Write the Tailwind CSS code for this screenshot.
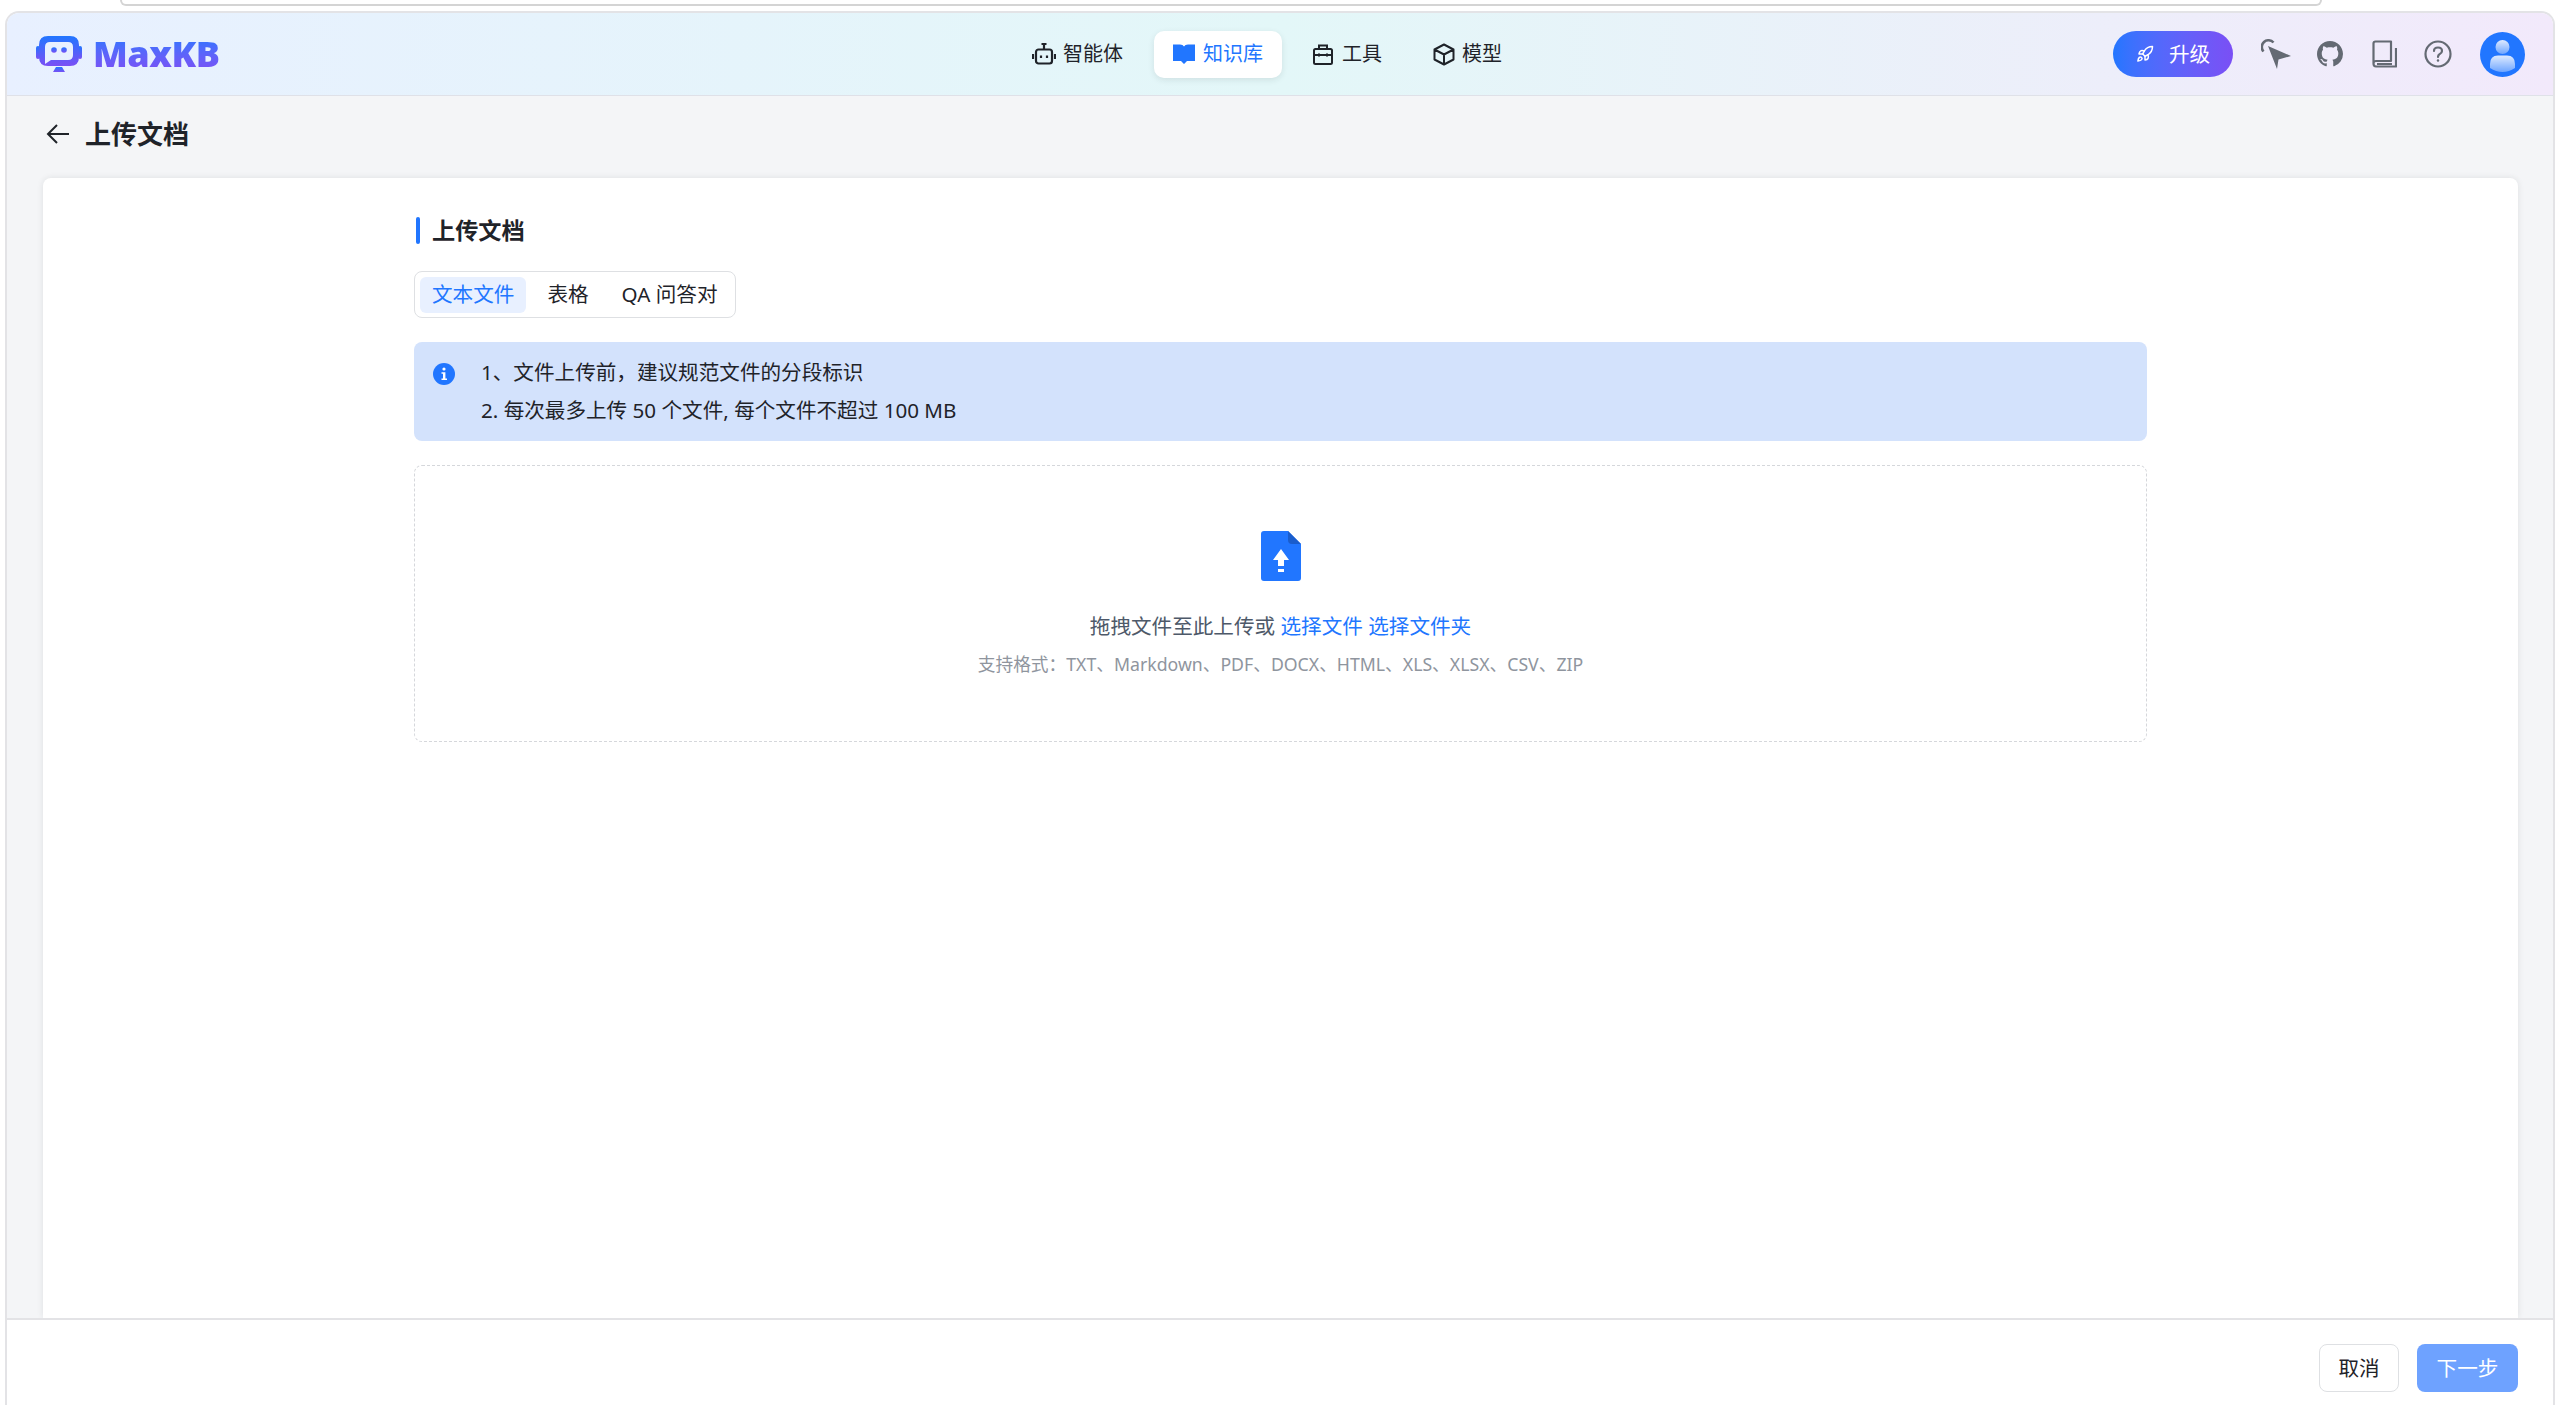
<!doctype html>
<html lang="zh-CN">
<head>
  <meta charset="utf-8"/>
  <title>MaxKB 上传文档</title>
  <script src="https://cdn.jsdelivr.net/npm/@tailwindcss/browser@4"></script>
</head>
<body class="w-[2556px] h-[1405px] overflow-hidden bg-white text-[#1f2329] [font-family:'Noto_Sans','Noto_Sans_CJK_SC',sans-serif]">
  <!-- strip of the browser bar above the window -->
  <div class="h-[11px] px-[120px]">
    <div class="h-[6px] mr-[114px] border-x-2 border-b-2 border-[#d4d4d4] rounded-b-[16px]"></div>
  </div>

  <div class="ml-[5px] mr-[1px] h-[1394px] flex flex-col border-x-2 border-t-2 border-[#e3e3e6] rounded-t-[14px] overflow-hidden">
    <!-- header -->
    <header class="h-[83px] shrink-0 flex items-center pl-[29px] pr-[28px] border-b border-[#dfe1e8] bg-linear-to-r from-[#e8f0ff] via-[#e3f7f8] to-[#f2e9fb]">
      <div class="flex items-center gap-[11px] w-[977px]">
        <svg width="46" height="36" viewBox="0 0 46 36">
          <defs>
            <linearGradient id="logo" x1="0" y1="0" x2="0" y2="1">
              <stop offset="0" stop-color="#2176ff"/>
              <stop offset="1" stop-color="#7a4ff5"/>
            </linearGradient>
          </defs>
          <rect x="0" y="10" width="4" height="13" rx="2" fill="url(#logo)"/>
          <rect x="42" y="10" width="4" height="13" rx="2" fill="url(#logo)"/>
          <path fill="url(#logo)" fill-rule="evenodd" d="M12 0H34Q43 0 43 9V21Q43 30 34 30H12Q3 30 3 21V9Q3 0 12 0ZM14 6Q9 6 9 11V28L15 24H32Q37 24 37 19V11Q37 6 32 6Z"/>
          <circle cx="18" cy="14" r="2.8" fill="url(#logo)"/>
          <circle cx="28" cy="14" r="2.8" fill="url(#logo)"/>
          <path fill="url(#logo)" d="M17 36L20 31H26L29 36Z"/>
        </svg>
        <span class="text-[36px] leading-none font-black tracking-[-0.5px] bg-linear-to-b from-[#2176ff] to-[#7a4ff5] bg-clip-text text-transparent">MaxKB</span>
      </div>

      <nav class="flex items-center gap-[12px] text-[20px]">
        <a class="h-[47px] flex items-center gap-[7px] pl-[19px] pr-[19px]">
          <svg width="24" height="24" viewBox="0 0 24 24" fill="none" stroke="#1f2329" stroke-width="2.2">
            <rect x="4" y="7.5" width="16" height="14" rx="2.5"/>
            <path d="M12 7.5V2.5M9.5 2h5M1 12v5M23 12v5M9 13.5v2.5M15 13.5v2.5"/>
          </svg>
          <span>智能体</span>
        </a>
        <a class="h-[47px] flex items-center gap-[8px] pl-[19px] pr-[19px] rounded-[10px] bg-white shadow-[0_2px_6px_rgba(31,35,41,0.1)] text-[#2176ff]">
          <svg width="22" height="22" viewBox="0 0 22 22" fill="#2176ff">
            <path d="M0 1.5H7Q10 1.5 11 3.5Q12 1.5 15 1.5H22V18H14L11 21L8 18H0Z"/>
          </svg>
          <span>知识库</span>
        </a>
        <a class="h-[47px] flex items-center gap-[9px] pl-[19px] pr-[19px]">
          <svg width="20" height="21" viewBox="0 0 20 21" fill="none" stroke="#1f2329" stroke-width="2">
            <rect x="1" y="5" width="18" height="15" rx="1.5"/>
            <path d="M6 5V1.5H14V5M1 11H19M6 9.5V12.5M14 9.5V12.5"/>
          </svg>
          <span>工具</span>
        </a>
        <a class="h-[47px] flex items-center gap-[7px] pl-[20px] pr-[18px]">
          <svg width="22" height="23" viewBox="0 0 22 23" fill="none" stroke="#1f2329" stroke-width="2" stroke-linejoin="round">
            <path d="M11 1.5L20.5 6.5V16.5L11 21.5L1.5 16.5V6.5ZM1.5 6.5L11 11.5L20.5 6.5M11 11.5V21.5"/>
          </svg>
          <span>模型</span>
        </a>
      </nav>

      <div class="ml-auto flex items-center">
        <button class="h-[46px] w-[120px] flex items-center justify-center gap-[15px] rounded-full bg-linear-to-r from-[#2176ff] to-[#7a4ff5] text-white text-[20.6px]">
          <svg width="18" height="18" viewBox="0 0 24 24" fill="none" stroke="#fff" stroke-width="2" stroke-linecap="round" stroke-linejoin="round">
            <path d="M4.5 16.5c-1.5 1.26-2 5-2 5s3.74-.5 5-2c.71-.84.7-2.13-.09-2.91a2.18 2.18 0 0 0-2.91-.09z"/>
            <path d="m12 15-3-3a22 22 0 0 1 2-3.95A12.88 12.88 0 0 1 22 2c0 2.72-.78 7.5-6 11a22.35 22.35 0 0 1-4 2z"/>
            <path d="M9 12H4s.55-3.03 2-4c1.62-1.08 5 0 5 0M12 15v5s3.03-.55 4-2c1.08-1.62 0-5 0-5"/>
          </svg>
          <span>升级</span>
        </button>

        <svg class="ml-[28px]" width="30" height="30" viewBox="0 0 30 30" fill="#646a73">
          <path d="M7 7L30 17L17.5 20.5L16 30Z"/>
          <path d="M2.5 12.5A6 6 0 0 1 12.5 3.5" fill="none" stroke="#646a73" stroke-width="2.6"/>
        </svg>
        <svg class="ml-[26px]" width="26" height="26" viewBox="0 0 16 16" fill="#646a73">
          <path d="M8 0C3.58 0 0 3.58 0 8c0 3.54 2.29 6.53 5.47 7.59.4.07.55-.17.55-.38 0-.19-.01-.82-.01-1.49-2.01.37-2.53-.49-2.69-.94-.09-.23-.48-.94-.82-1.13-.28-.15-.68-.52-.01-.53.63-.01 1.08.58 1.23.82.72 1.21 1.87.87 2.33.66.07-.52.28-.87.51-1.07-1.78-.2-3.64-.89-3.64-3.95 0-.87.31-1.59.82-2.15-.08-.2-.36-1.02.08-2.12 0 0 .67-.21 2.2.82.64-.18 1.32-.27 2-.27s1.36.09 2 .27c1.53-1.04 2.2-.82 2.2-.82.44 1.1.16 1.92.08 2.12.51.56.82 1.27.82 2.15 0 3.07-1.87 3.75-3.65 3.95.29.25.54.73.54 1.48 0 1.07-.01 1.93-.01 2.2 0 .21.15.46.55.38A8.01 8.01 0 0 0 16 8c0-4.42-3.58-8-8-8z"/>
        </svg>
        <svg class="ml-[29px]" width="25" height="28" viewBox="0 0 25 28" fill="none" stroke="#646a73" stroke-width="2.2" stroke-linejoin="round">
          <path d="M1.5 23.5V3.5Q1.5 1.5 3.5 1.5H19V21H4Q1.5 21 1.5 23.5Q1.5 26.5 4 26.5H24V8"/>
          <path d="M5 24H20"/>
        </svg>
        <svg class="ml-[27px]" width="28" height="28" viewBox="0 0 28 28" fill="none" stroke="#646a73" stroke-width="2.2" stroke-linecap="round">
          <circle cx="14" cy="14" r="12.5"/>
          <path d="M10 11Q10 7.5 14 7.5Q18 7.5 18 11Q18 13 15.5 14.2Q14 15 14 17"/>
          <circle cx="14" cy="20.5" r="0.6" fill="#646a73" stroke-width="1.4"/>
        </svg>
        <svg class="ml-[28px]" width="45" height="45" viewBox="0 0 45 45">
          <defs>
            <linearGradient id="person" x1="0" y1="0" x2="0" y2="1">
              <stop offset="0" stop-color="#fff" stop-opacity="0.85"/>
              <stop offset="1" stop-color="#fff" stop-opacity="0.35"/>
            </linearGradient>
          </defs>
          <circle cx="22.5" cy="22.5" r="22.5" fill="#2176ff"/>
          <circle cx="22.5" cy="15" r="7" fill="url(#person)"/>
          <path d="M10 36V32Q10 23.5 18 23.5H27Q35 23.5 35 32V36Q29 40 22.5 40Q16 40 10 36Z" fill="url(#person)"/>
        </svg>
      </div>
    </header>

    <!-- page -->
    <main class="flex-1 min-h-0 flex flex-col bg-[#f4f5f7]">
      <div class="h-[82px] shrink-0 flex items-center pl-[39px] pb-[6px]">
        <svg width="24" height="22" viewBox="0 0 24 22" fill="none" stroke="#1f2329" stroke-width="2">
          <path d="M23 11H2M11 2L2 11L11 20"/>
        </svg>
        <h1 class="ml-[15px] text-[26px] font-semibold">上传文档</h1>
      </div>

      <section class="flex-1 min-h-0 ml-[36px] mr-[35px] pt-[39px] pl-[371px] pr-[371px] bg-white rounded-t-[8px] shadow-[0_0_6px_rgba(31,35,41,0.1)]">
        <div class="h-[27px] flex items-center pl-[2px]">
          <span class="w-[4px] h-[27px] bg-[#2176ff] rounded-sm"></span>
          <h2 class="ml-[12px] text-[23.2px] font-semibold">上传文档</h2>
        </div>

        <div class="mt-[27px] w-[322px] h-[47px] flex items-center gap-[9px] p-[5px] border border-[#dee0e3] rounded-[8px] text-[20.6px] whitespace-nowrap">
          <span class="h-[36px] px-[12px] flex items-center rounded-[6px] bg-[#e8f0ff] text-[#2176ff]">文本文件</span>
          <span class="h-[36px] px-[12px] flex items-center">表格</span>
          <span class="h-[36px] px-[12px] flex items-center">QA 问答对</span>
        </div>

        <div class="mt-[24px] h-[99px] pt-[11px] pl-[19px] flex items-start rounded-[8px] bg-[#d3e2fc] text-[20.6px] leading-[38px]">
          <svg class="mt-[10px] shrink-0" width="22" height="22" viewBox="0 0 22 22">
            <circle cx="11" cy="11" r="11" fill="#2176ff"/>
            <circle cx="11" cy="6" r="1.6" fill="#fff"/>
            <path d="M8.5 9.2H12.4V15.4H14V17H8.5V15.4H10V10.8H8.5Z" fill="#fff"/>
          </svg>
          <div class="ml-[26px]">
            <p>1、文件上传前，建议规范文件的分段标识</p>
            <p>2. 每次最多上传 50 个文件, 每个文件不超过 100 MB</p>
          </div>
        </div>

        <div class="mt-[24px] h-[277px] flex flex-col items-center pt-[65px] border border-dashed border-[#d5d7db] rounded-[8px]">
          <svg width="40" height="50" viewBox="0 0 40 50">
            <path d="M3 0H27L40 13V47Q40 50 37 50H3Q0 50 0 47V3Q0 0 3 0Z" fill="#2176ff"/>
            <path d="M27 0L40 13H31Q27 13 27 9Z" fill="#1a5dcc"/>
            <path d="M20 18L28 29H23V35H17V29H12Z" fill="#fff"/>
            <rect x="17" y="38" width="6" height="3" fill="#fff"/>
          </svg>
          <p class="mt-[30px] text-[20.6px] leading-[30px] text-[#4e5969]">拖拽文件至此上传或 <span class="text-[#2176ff]">选择文件</span> <span class="text-[#2176ff]">选择文件夹</span></p>
          <p class="mt-[10px] text-[17.7px] leading-[26px] text-[#8f959e]">支持格式：TXT、Markdown、PDF、DOCX、HTML、XLS、XLSX、CSV、ZIP</p>
        </div>
      </section>

      <footer class="h-[87px] shrink-0 flex items-start justify-end gap-[18px] pt-[24px] pr-[35px] bg-white border-t-2 border-[#e3e3e6] text-[20.6px]">
        <button class="w-[80px] h-[48px] rounded-[8px] bg-white border border-[#dee0e3]">取消</button>
        <button class="w-[101px] h-[48px] rounded-[8px] bg-[#6ea2ff] text-white">下一步</button>
      </footer>
    </main>
  </div>
</body>
</html>
